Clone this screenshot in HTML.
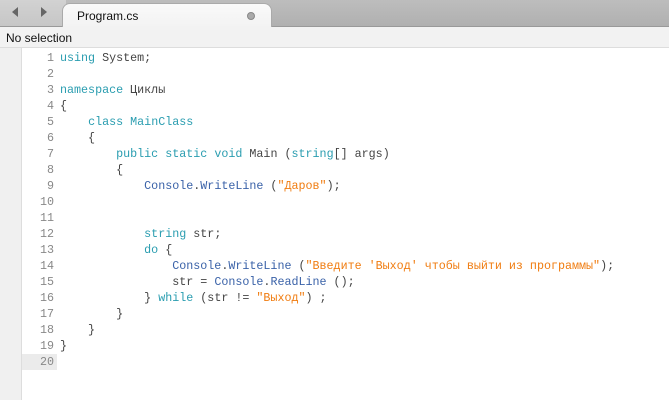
<!DOCTYPE html>
<html><head><meta charset="utf-8"><style>
*{margin:0;padding:0;box-sizing:border-box}
body{width:669px;height:400px;overflow:hidden;background:#fff;font-family:"Liberation Sans",sans-serif;position:relative}
#tabs{position:absolute;left:0;top:0;width:669px;height:27px;background:linear-gradient(#bdbdbd,#b0b0b0);border-bottom:1px solid #999}
#left{position:absolute;left:0;top:0;width:66px;height:26px;background:linear-gradient(#d2d2d2,#c6c6c6)}
#tab{position:absolute;left:62px;top:3px;width:210px;height:25px;background:linear-gradient(#fafafa,#f2f2f2);border-radius:8px 8px 0 0;border:1px solid #aaa;border-bottom:none}
#tab span{position:absolute;left:14px;top:5px;font-size:12px;color:#111}
#dot{position:absolute;left:184px;top:8px;width:8px;height:8px;border-radius:50%;background:#aaa;border:1px solid #888}
#status{position:absolute;left:0;top:27px;width:669px;height:21px;background:#f2f2f2;border-bottom:1px solid #ddd;font-size:12px;color:#111;padding:4px 0 0 6px}
#gut{position:absolute;left:0;top:48px;width:22px;height:352px;background:#f0f0f0;border-right:1px solid #ddd}
#code{position:absolute;left:22px;top:50px;font-family:"Liberation Mono","DejaVu Sans Mono",monospace;font-size:11.7px;line-height:16px;color:#444;white-space:pre}
.l{display:block;height:16px}
.n{display:inline-block;width:32px;text-align:right;color:#888;margin-right:6px}
.k{color:#2a9db0}.s{color:#f07c10}.c{color:#3a62a8}
.hl{background:#ebebeb;width:35px}
</style></head><body>
<div id="tabs"><div id="left"></div>
<svg style="position:absolute;left:11px;top:7px" width="8" height="10"><path d="M7 0 L1 5 L7 10Z" fill="#666"/></svg>
<svg style="position:absolute;left:40px;top:7px" width="8" height="10"><path d="M1 0 L7 5 L1 10Z" fill="#666"/></svg>
<div id="tab"><span>Program.cs</span><div id="dot"></div></div></div>
<div id="status">No selection</div>
<div id="gut"></div>
<div id="code"><span class="l"><span class="n">1</span><span class="k">using</span> System;</span><span class="l"><span class="n">2</span></span><span class="l"><span class="n">3</span><span class="k">namespace</span> Циклы</span><span class="l"><span class="n">4</span>{</span><span class="l"><span class="n">5</span>    <span class="k">class</span> <span class="k">MainClass</span></span><span class="l"><span class="n">6</span>    {</span><span class="l"><span class="n">7</span>        <span class="k">public</span> <span class="k">static</span> <span class="k">void</span> Main (<span class="k">string</span>[] args)</span><span class="l"><span class="n">8</span>        {</span><span class="l"><span class="n">9</span>            <span class="c">Console</span>.<span class="c">WriteLine</span> (<span class="s">"Даров"</span>);</span><span class="l"><span class="n">10</span></span><span class="l"><span class="n">11</span></span><span class="l"><span class="n">12</span>            <span class="k">string</span> str;</span><span class="l"><span class="n">13</span>            <span class="k">do</span> {</span><span class="l"><span class="n">14</span>                <span class="c">Console</span>.<span class="c">WriteLine</span> (<span class="s">"Введите 'Выход' чтобы выйти из программы"</span>);</span><span class="l"><span class="n">15</span>                str = <span class="c">Console</span>.<span class="c">ReadLine</span> ();</span><span class="l"><span class="n">16</span>            } <span class="k">while</span> (str != <span class="s">"Выход"</span>) ;</span><span class="l"><span class="n">17</span>        }</span><span class="l"><span class="n">18</span>    }</span><span class="l"><span class="n">19</span>}</span><span class="l hl"><span class="n">20</span></span></div>
</body></html>
